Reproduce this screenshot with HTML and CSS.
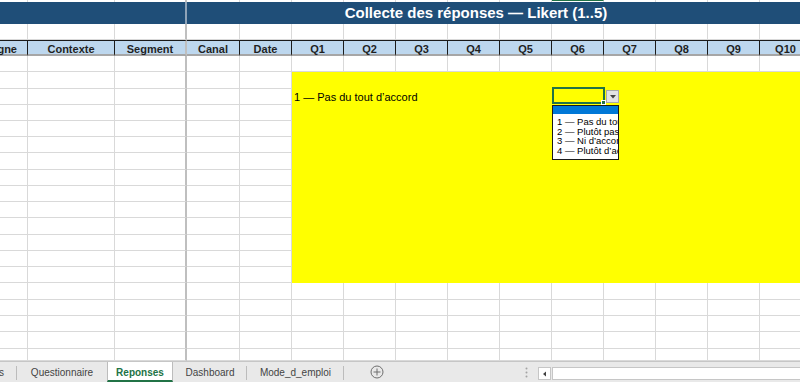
FILE: index.html
```html
<!DOCTYPE html>
<html lang="fr">
<head>
  <meta charset="UTF-8">
  <title>Reponses</title>
  <link rel="stylesheet" href="styles.css">
</head>
<body>

  <div class="sheet">
    <!-- bas des en-têtes de colonnes (colonne active Q6) -->
    <div class="r top"><i></i><i></i><i></i><i></i><i></i><i></i><i></i><i></i><i></i><i></i><i class="sel"></i><i></i><i></i><i></i><i></i></div>

    <div class="banner">
      <div class="banner-left"></div>
      <h1>Collecte des réponses — Likert (1..5)</h1>
    </div>

    <div class="r"><i></i><i></i><i></i><i></i><i></i><i></i><i></i><i></i><i></i><i></i><i></i><i></i><i></i><i></i><i></i></div>

    <div class="r head">
      <i class="cut"><span>Campagne</span></i><i>Contexte</i><i>Segment</i><i>Canal</i><i>Date</i>
      <i>Q1</i><i>Q2</i><i>Q3</i><i>Q4</i><i>Q5</i><i>Q6</i><i>Q7</i><i>Q8</i><i>Q9</i><i>Q10</i>
    </div>

    <div class="r"><i></i><i></i><i></i><i></i><i></i><i></i><i></i><i></i><i></i><i></i><i></i><i></i><i></i><i></i><i></i></div>

    <!-- zone de saisie (jaune) -->
    <div class="r tall"><i></i><i></i><i></i><i></i><i></i><span class="fill"></span></div>
    <div class="r">
      <i></i><i></i><i></i><i></i><i></i>
      <span class="fill open">
        <span class="val">1 — Pas du tout d’accord</span>
        <span class="active"></span>
        <span class="dd-btn"><svg width="6" height="4" viewBox="0 0 6 4"><path d="M0 0h6L3 3.5z" fill="#444"/></svg></span>
        <ul class="dd-list">
          <li class="hl"></li>
          <li>1 — Pas du tout d’accord</li>
          <li>2 — Plutôt pas d’accord</li>
          <li>3 — Ni d’accord ni pas d’accord</li>
          <li>4 — Plutôt d’accord</li>
        </ul>
      </span>
    </div>
    <div class="r"><i></i><i></i><i></i><i></i><i></i><span class="fill"></span></div>
    <div class="r"><i></i><i></i><i></i><i></i><i></i><span class="fill"></span></div>
    <div class="r"><i></i><i></i><i></i><i></i><i></i><span class="fill"></span></div>
    <div class="r tall"><i></i><i></i><i></i><i></i><i></i><span class="fill"></span></div>
    <div class="r"><i></i><i></i><i></i><i></i><i></i><span class="fill"></span></div>
    <div class="r"><i></i><i></i><i></i><i></i><i></i><span class="fill"></span></div>
    <div class="r"><i></i><i></i><i></i><i></i><i></i><span class="fill"></span></div>
    <div class="r tall"><i></i><i></i><i></i><i></i><i></i><span class="fill"></span></div>
    <div class="r"><i></i><i></i><i></i><i></i><i></i><span class="fill"></span></div>
    <div class="r"><i></i><i></i><i></i><i></i><i></i><span class="fill"></span></div>
    <div class="r"><i></i><i></i><i></i><i></i><i></i><span class="fill"></span></div>

    <div class="r tall"><i></i><i></i><i></i><i></i><i></i><i></i><i></i><i></i><i></i><i></i><i></i><i></i><i></i><i></i><i></i></div>
    <div class="r"><i></i><i></i><i></i><i></i><i></i><i></i><i></i><i></i><i></i><i></i><i></i><i></i><i></i><i></i><i></i></div>
    <div class="r"><i></i><i></i><i></i><i></i><i></i><i></i><i></i><i></i><i></i><i></i><i></i><i></i><i></i><i></i><i></i></div>
    <div class="r tall"><i></i><i></i><i></i><i></i><i></i><i></i><i></i><i></i><i></i><i></i><i></i><i></i><i></i><i></i><i></i></div>
    <div class="r last"><i></i><i></i><i></i><i></i><i></i><i></i><i></i><i></i><i></i><i></i><i></i><i></i><i></i><i></i><i></i></div>
  </div>

  <!-- onglets des feuilles -->
  <div class="tabs">
    <div class="tab first"><span>Listes</span></div>
    <div class="tab w90">Questionnaire</div>
    <div class="tab on">Reponses</div>
    <div class="tab w74">Dashboard</div>
    <div class="tab w97">Mode_d_emploi</div>
    <div class="add">
      <svg width="14" height="14" viewBox="0 0 14 14"><circle cx="7" cy="7" r="6" fill="none" stroke="#6f6f6f"/><path d="M7 3.5v7M3.5 7h7" stroke="#6f6f6f"/></svg>
    </div>
    <div class="grip">
      <svg width="3" height="11" viewBox="0 0 3 11"><circle cx="1.5" cy="1.5" r="1" fill="#a3a3a3"/><circle cx="1.5" cy="5.5" r="1" fill="#a3a3a3"/><circle cx="1.5" cy="9.5" r="1" fill="#a3a3a3"/></svg>
    </div>
    <div class="hscroll">
      <span class="arrow"><svg width="5" height="6" viewBox="0 0 5 6"><path d="M4 0.5v5L1 3z" fill="#404040"/></svg></span>
      <span class="track"></span>
    </div>
  </div>

</body>
</html>
```

FILE: styles.css
```css
html, body { margin: 0; overflow: hidden; }
body { width: 800px; height: 382px; font-family: "Liberation Sans", Arial, sans-serif; background: #fff; color: #000; }

.sheet { height: 361px; overflow: hidden; }

/* grille des cellules */
.r { display: flex; height: 16px; }
.r.tall { height: 17px; }
.r.last { height: 12px; }
.r i {
  flex: none;
  width: 52px;
  box-sizing: border-box;
  border-right: 1px solid #d9d9d9;
  border-bottom: 1px solid #d9d9d9;
  font-style: normal;
}
.r i:nth-child(1) { width: 28px; }
.r i:nth-child(2) { width: 87px; }
.r i:nth-child(3) { width: 72px; border-right: 2px solid #bfbfbf; }
.r i:nth-child(4) { width: 53px; }

.r.top { height: 2px; }
.r.top i { border-bottom: 0; }
.r.top i.sel { border-top: 1px solid #217346; }

/* bandeau titre */
.banner { display: flex; height: 22px; background: #1f4e78; }
.banner-left { flex: none; width: 185px; border-right: 2px solid #8ea3b8; }
.banner h1 {
  flex: none;
  width: 578px;
  margin: 0;
  text-align: center;
  color: #fff;
  font-size: 15px;
  line-height: 22px;
  font-weight: bold;
  white-space: nowrap;
}

/* en-têtes du tableau */
.r.head i {
  background: #bdd7ee;
  border-top: 1px solid #1a1a1a;
  border-right-color: #1a1a1a;
  border-bottom: 2px solid #a6a6a6;
  text-align: center;
  font-weight: bold;
  font-size: 11px;
  line-height: 17px;
  white-space: nowrap;
  color: #1f1f1f;
}
.r.head i:nth-child(3) { border-right-color: #bfbfbf; }
.r.head i.cut { display: flex; justify-content: flex-end; padding-right: 10px; }

/* zone jaune */
.fill { flex: 1 0 auto; position: relative; background: #ffff00; }
.fill.open { z-index: 2; }
.val {
  display: block;
  padding-left: 2px;
  font-size: 11px;
  line-height: 16px;
  white-space: nowrap;
}

/* cellule active + liste de validation */
.active {
  position: absolute;
  left: 260px;
  top: -2px;
  width: 53px;
  height: 17px;
  box-sizing: border-box;
  border: 2px solid #217346;
}
.active::after {
  content: "";
  position: absolute;
  right: -3px;
  bottom: -3px;
  width: 3px;
  height: 3px;
  background: #217346;
  border: 1px solid #fff;
}
.dd-btn {
  position: absolute;
  left: 314px;
  top: 1px;
  width: 13px;
  height: 13px;
  box-sizing: border-box;
  border: 1px solid #a9a9a9;
  background: #e3e3e3;
  display: flex;
  align-items: center;
  justify-content: center;
}
.dd-list {
  position: absolute;
  left: 260px;
  top: 16px;
  width: 67px;
  height: 55px;
  box-sizing: border-box;
  margin: 0;
  padding: 0;
  list-style: none;
  background: #fff;
  border: 1px solid #1a1a1a;
  overflow: hidden;
}
.dd-list li {
  padding-left: 4px;
  font-size: 9.5px;
  line-height: 9.7px;
  white-space: nowrap;
}
.dd-list li.hl { height: 8px; margin-bottom: 3px; padding: 0; background: #0078d7; }

/* barre des onglets */
.tabs {
  display: flex;
  height: 21px;
  box-sizing: border-box;
  border-top: 1px solid #c6c6c6;
  background: #e9e9e9;
  font-size: 10px;
  color: #444;
}
.tab {
  position: relative;
  flex: none;
  height: 20px;
  box-sizing: border-box;
  padding-top: 3px;
  line-height: 16px;
  text-align: center;
  white-space: nowrap;
}
.tab::after {
  content: "";
  position: absolute;
  right: 0;
  top: 4px;
  bottom: 2px;
  width: 1px;
  background: #bcbcbc;
}
.tab:has(+ .on)::after, .tab.on::after { display: none; }
.tab.first { width: 17px; display: flex; justify-content: flex-end; padding-right: 13px; }
.w90 { width: 90px; }
.w74 { width: 74px; }
.w97 { width: 97px; }
.tab.on {
  width: 66px;
  background: #fff;
  border-left: 1px solid #bcbcbc;
  border-right: 1px solid #bcbcbc;
  border-bottom: 2px solid #217346;
  color: #217346;
  font-weight: bold;
}

.add { width: 24px; margin-left: 21px; display: flex; align-items: center; justify-content: center; }
.grip { margin-left: auto; width: 14px; margin-right: 5px; display: flex; align-items: center; justify-content: center; }
.hscroll { width: 262px; display: flex; padding-top: 5px; box-sizing: border-box; }
.arrow {
  width: 13px;
  height: 13px;
  box-sizing: border-box;
  border: 1px solid #c6c6c6;
  background: #fff;
  display: flex;
  align-items: center;
  justify-content: center;
}
.track {
  flex: 1;
  height: 13px;
  margin-left: 1px;
  box-sizing: border-box;
  border: 1px solid #c6c6c6;
  border-right: 0;
  background: #fff;
}
```
